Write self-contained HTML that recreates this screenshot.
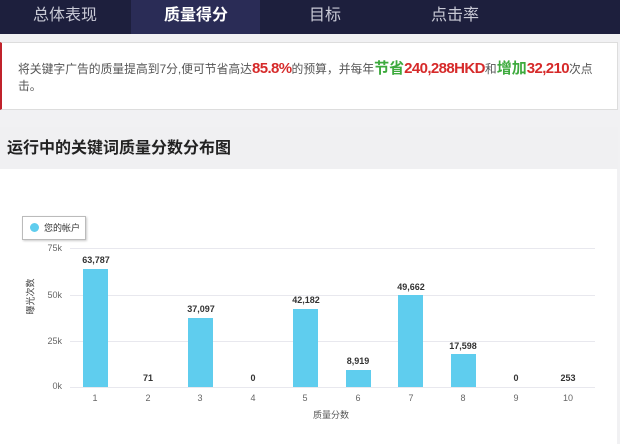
<!DOCTYPE html>
<html><head><meta charset="utf-8"><style>
*{margin:0;padding:0;box-sizing:border-box}
body{width:620px;height:444px;overflow:hidden;background:#f1f1f3;font-family:"Liberation Sans","Noto Sans CJK SC",sans-serif;position:relative}
.a{position:absolute}
.nav{left:0;top:0;width:620px;height:34px;background:#1d1f3d}
.tab{top:0;height:34px;width:130px;text-align:center;line-height:32px;font-size:16px;color:#c9cad6}
.alert{left:0;top:42px;width:618px;height:68px;background:#fff;border:1px solid #ddd;border-left:2px solid #c0222b}
.alert p{position:absolute;left:16px;top:17px;font-size:11.8px;line-height:17px;color:#555;white-space:nowrap}
.r{color:#d62a2a;font-size:15px;font-weight:bold;letter-spacing:-0.6px}
.g{color:#3daa3d;font-size:15px;font-weight:bold}
.hd{left:0;top:127px;width:618px;height:42px;background:#f0f0f2;font-size:16px;font-weight:bold;color:#222;line-height:44px;padding-left:7px}
.ch{left:0;top:169px;width:617px;height:275px;background:#fff}
.yl{font-size:9px;color:#666;width:40px;text-align:right;left:22px}
.gl{left:70px;width:525px;height:1px;background:#e8e8ee}
.bar{width:25px;background:#5fcdee;bottom:57px}
.v{font-size:9px;font-weight:bold;color:#333;width:50px;text-align:center}
.xl{font-size:9px;color:#666;width:30px;text-align:center;top:393px}
</style></head><body>
<div class="a nav"></div>
<div class="a" style="left:131px;top:0;width:129px;height:34px;background:#2a2c56"></div>
<div class="a tab" style="left:0">总体表现</div>
<div class="a tab" style="left:131px;color:#fff;font-weight:bold">质量得分</div>
<div class="a tab" style="left:260px">目标</div>
<div class="a tab" style="left:390px">点击率</div>
<div class="a alert"><p>将关键字广告的质量提高到7分,便可节省高达<span class="r">85.8%</span>的预算，并每年<span class="g">节省</span><span class="r">240,288HKD</span>和<span class="g">增加</span><span class="r">32,210</span>次点<br>击。</p></div>
<div class="a hd">运行中的关键词质量分数分布图</div>
<div class="a ch"></div>
<div class="a" style="left:22px;top:216px;width:64px;height:24px;border:1px solid #bbb;background:#fff;box-shadow:1px 1px 2px #ccc"></div>
<div class="a" style="left:30px;top:223px;width:9px;height:9px;border-radius:50%;background:#5fcdee"></div>
<div class="a" style="left:44px;top:221px;font-size:9px;color:#333">您的帐户</div>
<div class="a yl" style="top:243px">75k</div>
<div class="a yl" style="top:290px">50k</div>
<div class="a yl" style="top:336px">25k</div>
<div class="a yl" style="top:381px">0k</div>
<div class="a gl" style="top:248px"></div>
<div class="a gl" style="top:295px"></div>
<div class="a gl" style="top:341px"></div>
<div class="a gl" style="top:387px"></div>
<div class="a" style="left:22px;top:290px;font-size:9px;color:#444;transform:rotate(-90deg);transform-origin:center;width:40px;text-align:center;margin-left:-12px">曝光次数</div>
<div class="a bar" style="left:83px;height:118px"></div>
<div class="a bar" style="left:188px;height:69px"></div>
<div class="a bar" style="left:293px;height:78px"></div>
<div class="a bar" style="left:346px;height:17px"></div>
<div class="a bar" style="left:398px;height:92px"></div>
<div class="a bar" style="left:451px;height:33px"></div>
<div class="a v" style="left:71px;top:255px">63,787</div>
<div class="a v" style="left:123px;top:373px">71</div>
<div class="a v" style="left:176px;top:304px">37,097</div>
<div class="a v" style="left:228px;top:373px">0</div>
<div class="a v" style="left:281px;top:295px">42,182</div>
<div class="a v" style="left:333px;top:356px">8,919</div>
<div class="a v" style="left:386px;top:282px">49,662</div>
<div class="a v" style="left:438px;top:341px">17,598</div>
<div class="a v" style="left:491px;top:373px">0</div>
<div class="a v" style="left:543px;top:373px">253</div>
<div class="a xl" style="left:80px">1</div>
<div class="a xl" style="left:133px">2</div>
<div class="a xl" style="left:185px">3</div>
<div class="a xl" style="left:238px">4</div>
<div class="a xl" style="left:290px">5</div>
<div class="a xl" style="left:343px">6</div>
<div class="a xl" style="left:396px">7</div>
<div class="a xl" style="left:448px">8</div>
<div class="a xl" style="left:501px">9</div>
<div class="a xl" style="left:553px">10</div>
<div class="a" style="left:313px;top:408px;font-size:9px;color:#555">质量分数</div>
</body></html>
